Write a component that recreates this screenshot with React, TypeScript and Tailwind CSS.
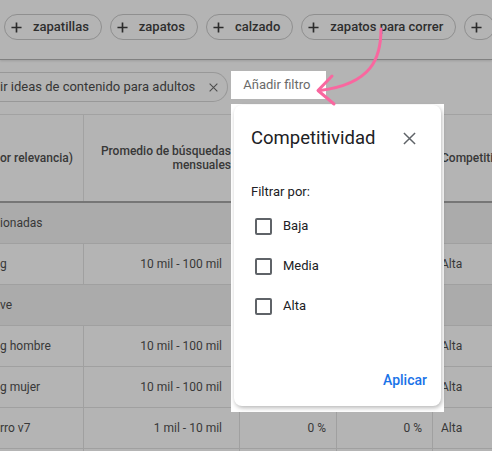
import React from 'react';

const chips = ['zapatillas', 'zapatos', 'calzado', 'zapatos para correr', ''];

type Row =
  | { kind: 'group'; label: string }
  | { kind: 'data'; label: string; searches: string; a: string; b: string; comp: string };

// col3/col4 values of the upper rows sit under the popup, so they are left empty
const rows: Row[] = [
  { kind: 'group', label: 'ionadas' },
  { kind: 'data', label: 'g', searches: '10 mil - 100 mil', a: '', b: '', comp: 'Alta' },
  { kind: 'group', label: 've' },
  { kind: 'data', label: 'g hombre', searches: '10 mil - 100 mil', a: '', b: '', comp: 'Alta' },
  { kind: 'data', label: 'g mujer', searches: '10 mil - 100 mil', a: '', b: '', comp: 'Alta' },
  { kind: 'data', label: 'rro v7', searches: '1 mil - 10 mil', a: '0 %', b: '0 %', comp: 'Alta' },
  { kind: 'data', label: '', searches: '', a: '', b: '', comp: '' },
];

function Plus() {
  return (
    <svg width="11" height="11" viewBox="0 0 12 12" className="shrink-0">
      <path d="M6 0.5v11M0.5 6h11" stroke="#2b2b2b" strokeWidth="1.8" />
    </svg>
  );
}

function Cross({ size, color, width }: { size: number; color: string; width: number }) {
  return (
    <svg width={size} height={size} viewBox="0 0 14 14" className="shrink-0">
      <path d="M1 1l12 12M13 1L1 13" stroke={color} strokeWidth={width} />
    </svg>
  );
}

export default function App() {
  return (
    <div className="relative w-[492px] h-[451px] overflow-hidden bg-[#b4b4b4] font-['Roboto',sans-serif] text-[#2e2e2e]">
      {/* Suggested keyword chips */}
      <div className="h-[60px] flex items-start pt-[14px] pl-[4px] gap-[8px] border-b border-[#808080] shadow-[0_1px_2px_rgba(0,0,0,0.12)] whitespace-nowrap">
        {chips.map((c, i) => (
          <div
            key={i}
            className="h-[26px] flex items-center gap-[11px] pl-[6px] pr-[12px] rounded-full border border-[#8f8f8f] shrink-0"
          >
            <Plus />
            {c && <span className="text-[13px] font-medium">{c}</span>}
          </div>
        ))}
      </div>

      {/* Filter row */}
      <div className="h-[54px] flex items-start whitespace-nowrap">
        <div className="mt-[12px] h-[30px] flex items-center gap-[14px] pr-[9px] rounded-r-full border border-l-0 border-[#989898]">
          <span className="text-[13px] text-[#363636]">ir ideas de contenido para adultos</span>
          <Cross size={9} color="#4a4a4a" width={1.6} />
        </div>
        <div className="ml-[3px] mt-[11px] w-[95px] h-[28px] bg-white flex items-center pl-[12px] text-[13px] text-[#6a6a6a]">
          Añadir filtro
        </div>
      </div>

      {/* Table */}
      <div className="border-t border-[#a2a2a2] text-[12px] text-[#383838] whitespace-nowrap">
        <div className="grid grid-cols-[84px_156px_97px_96px_1fr] h-[88px] border-b-2 border-[#767676] font-medium">
          <div className="flex items-center border-r border-[#a2a2a2]">or relevancia)</div>
          <div className="flex items-center justify-end text-right pr-[8px] leading-[14px] border-r border-[#a2a2a2]">
            Promedio de búsquedas
            <br />
            mensuales
          </div>
          <div className="border-r border-[#a2a2a2]" />
          <div className="border-r border-[#a2a2a2]" />
          <div className="flex items-center pl-[8px] overflow-hidden">Competitividad</div>
        </div>
        {rows.map((r, i) =>
          r.kind === 'group' ? (
            <div key={i} className="h-[41px] flex items-center bg-[#ababab] border-b border-[#a0a0a0]">
              {r.label}
            </div>
          ) : (
            <div key={i} className="grid grid-cols-[84px_156px_97px_96px_1fr] h-[41px] border-b border-[#a0a0a0]">
              <div className="flex items-center border-r border-[#a0a0a0]">{r.label}</div>
              <div className="flex items-center justify-end pr-[17px] border-r border-[#a0a0a0]">{r.searches}</div>
              <div className="flex items-center justify-end pr-[10px] border-r border-[#a0a0a0]">{r.a}</div>
              <div className="flex items-center justify-end pr-[10px] border-r border-[#a0a0a0]">{r.b}</div>
              <div className="flex items-center pl-[8px]">{r.comp}</div>
            </div>
          )
        )}
      </div>

      {/* Highlighted filter popup */}
      <div className="absolute left-[231px] top-[104px] w-[213px] h-[308px] bg-white pl-[3px] pt-[1px]">
        <div className="w-[207px] h-[301px] rounded-[8px] bg-white shadow-[1px_2px_4px_rgba(0,0,0,0.28)] flex flex-col pl-[17px] pr-[14px] pt-[21px] pb-[16px]">
          <div className="flex items-center justify-between h-[24px] pr-[11px]">
            <span className="text-[18.5px] leading-[24px] text-[#202124]">Competitividad</span>
            <Cross size={13} color="#5f6368" width={1.6} />
          </div>
          <div className="mt-[32px] text-[13px] leading-[20px] text-[#202124]">Filtrar por:</div>
          <div className="mt-[4px] flex flex-col">
            {['Baja', 'Media', 'Alta'].map((o) => (
              <div key={o} className="h-[40px] flex items-center gap-[11px] pl-[4px]">
                <div className="w-[17px] h-[17px] rounded-[2px] border-2 border-[#5f6368]" />
                <span className="text-[13px] text-[#202124]">{o}</span>
              </div>
            ))}
          </div>
          <div className="mt-auto flex justify-end">
            <span className="text-[14px] leading-[20px] font-medium text-[#1a73e8]">Aplicar</span>
          </div>
        </div>
      </div>

      {/* Pink arrow annotation */}
      <svg className="absolute inset-0 pointer-events-none" width="492" height="451" viewBox="0 0 492 451">
        <path
          d="M381 29 C 381 58, 372 84, 320 90.5"
          fill="none"
          stroke="#f9679f"
          strokeWidth="3"
          strokeLinecap="round"
        />
        <path
          d="M332 76 L318 90.5 L334 104"
          fill="none"
          stroke="#f9679f"
          strokeWidth="3"
          strokeLinecap="round"
          strokeLinejoin="round"
        />
      </svg>
    </div>
  );
}
